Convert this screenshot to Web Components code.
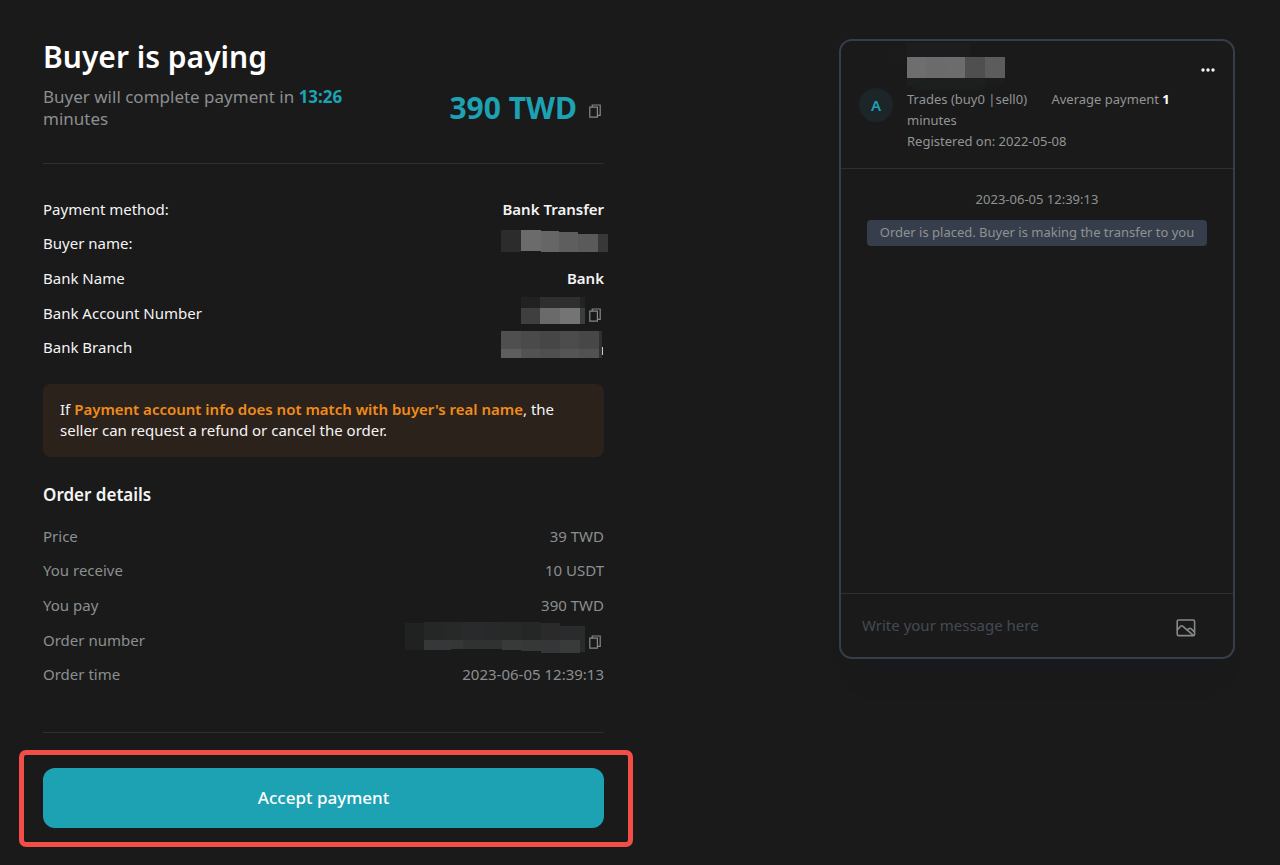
<!DOCTYPE html>
<html lang="en">
<head>
<meta charset="utf-8">
<meta name="viewport" content="width=device-width, initial-scale=1">
<title>Buyer is paying</title>
<style>
  body {
    margin: 0;
    background: #1a1a1a;
    color: #f4f4f4;
    font-family: "Noto Sans", sans-serif;
    font-size: 15px;
    line-height: 21px;
    --muted: #8b8f90;
    --accent: #1da2b4;
    --line: #2c2f33;
    --outline: #373e4b;
    --alert: #f04e47;
    --warn: #f08c1a;
  }
</style>
</head>
<body>
<order-page>
  <order-summary slot="main">
    <order-heading>
      <span slot="title">Buyer is paying</span>
      <span slot="note">Buyer will complete payment in <accent-text>13:26</accent-text> minutes</span>
      <span slot="amount">390 TWD</span>
    </order-heading>
    <detail-list>
      <detail-row label="Payment method:" strong>Bank Transfer</detail-row>
      <detail-row label="Buyer name:" bleed><redacted-text width="107" height="22" cells="0,0,20,22,#2c2c2c;20,0,20,21,#6b6b6b;40,1,18,21,#666;58,2,19,20,#5e5e5e;77,4,20,18,#5a5a5a;97,4,10,18,#383838"></redacted-text></detail-row>
      <detail-row label="Bank Name" strong>Bank</detail-row>
      <detail-row label="Bank Account Number" copy><redacted-text width="64" height="27" cells="0,0,19,11,#212121;19,0,40,11,#2f2f2f;59,0,5,11,#232323;0,11,19,16,#3f3f3f;19,11,20,16,#6a6a6a;39,11,20,16,#747474;59,11,5,16,#3a3e3e"></redacted-text></detail-row>
      <detail-row label="Bank Branch"><redacted-text width="103" height="27" cells="0,0,20,18,#4f4f4f;20,0,19,18,#4a4a4a;39,0,20,18,#464646;59,0,19,18,#4c4c4c;78,0,20,18,#474747;98,0,3,27,#303030;0,18,20,9,#5e5e5e;20,18,19,9,#525252;39,18,20,9,#4f4f4f;59,18,19,9,#555;78,18,20,9,#525252;101,16,1,8,#ccc"></redacted-text></detail-row>
    </detail-list>
    <warning-note>If <strong>Payment account info does not match with buyer's real name</strong>, the <span>seller can request a refund or cancel the order.</span></warning-note>
    <section-title>Order details</section-title>
    <detail-list muted>
      <detail-row label="Price">39 TWD</detail-row>
      <detail-row label="You receive">10 USDT</detail-row>
      <detail-row label="You pay">390 TWD</detail-row>
      <detail-row label="Order number" copy><redacted-text width="180" height="31" cells="0,1,19,27,#202121;19,0,20,18,#252727;39,0,19,18,#272828;58,0,19,18,#292a2b;77,0,20,18,#27292a;97,0,19,18,#272828;116,0,20,18,#252727;136,1,19,17,#2a2a2a;155,4,20,14,#2a2b2c;175,4,5,26,#2a2c2c;19,18,27,10,#363738;46,18,12,9,#353736;58,18,19,9,#303231;77,18,20,9,#303231;97,18,19,10,#38393a;116,18,20,11,#363837;136,18,19,13,#353637;155,18,20,13,#393b3a"></redacted-text></detail-row>
      <detail-row label="Order time">2023-06-05 12:39:13</detail-row>
    </detail-list>
    <accept-action>Accept payment</accept-action>
  </order-summary>
  <chat-card slot="side">
    <chat-profile slot="profile" initial="A">
      <redacted-text slot="name" width="98" height="21" cells="0,-14,63,14,#1d1d1f;-15,-2,15,2,#1c1c1c;0,0,19,21,#6e6e6e;19,0,20,21,#6b6b6b;39,0,20,21,#6c6c6c;58,0,20,21,#4f4f4f;78,0,20,21,#5c5c5c;0,21,78,8,#1d1e1e;78,21,20,6,#1c1c1c;6,29,70,4,#1c1d1d"></redacted-text>
      <span slot="trades">Trades (buy0 |sell0)</span>
      <span slot="average">Average payment <b>1</b> minutes</span>
      <span slot="since">Registered on: 2022-05-08</span>
    </chat-profile>
    <chat-message slot="messages" time="2023-06-05 12:39:13">Order is placed. Buyer is making the transfer to you</chat-message>
    <chat-composer slot="composer"></chat-composer>
  </chat-card>
</order-page>

<script>
  const define = (name, html, setup) => {
    const template = document.createElement('template');
    template.innerHTML = html;
    customElements.define(name, class extends HTMLElement {
      constructor() {
        super();
        this.attachShadow({ mode: 'open' }).append(template.content.cloneNode(true));
      }
      connectedCallback() {
        if (setup) setup(this, this.shadowRoot);
      }
    });
  };

  define('order-page', `
    <style>
      :host { display: block; padding: 39px 45px 18px 43px; }
      .layout { display: grid; grid-template-columns: 561fr 396fr; column-gap: 235px; align-items: start; }
      @media (max-width: 900px) { .layout { grid-template-columns: 1fr; row-gap: 40px; } }
    </style>
    <div class="layout">
      <main><slot name="main"></slot></main>
      <aside><slot name="side"></slot></aside>
    </div>`);

  define('order-summary', `
    <style>:host { display: block; }</style>
    <slot></slot>`);

  define('accent-text', `
    <style>:host { display: inline; color: var(--accent); font-weight: 700; }</style>
    <slot></slot>`);

  define('copy-button', `
    <style>
      :host { display: inline-flex; flex: none; }
      button { all: unset; display: flex; cursor: pointer; }
      svg { display: block; fill: none; stroke: #858989; stroke-width: 1.2; }
    </style>
    <button type="button" aria-label="Copy">
      <svg width="12" height="14" viewBox="0 0 12 14"><path d="M.8 3.2h7.6v10H.8zM3.2 3V1h8v10.4H8.6"/></svg>
    </button>`);

  define('order-heading', `
    <style>
      :host { display: flex; justify-content: space-between; align-items: flex-start; border-bottom: 1px solid var(--line); padding-bottom: 33px; }
      h1 { margin: 0; font-size: 30px; line-height: 36px; font-weight: 600; color: #fff; }
      p { margin: 11px 0 0; font-size: 17px; line-height: 22px; color: var(--muted); max-width: 320px; }
      .amount { display: flex; align-items: center; gap: 12px; padding: 49px 3px 0 0; font-size: 30px; line-height: 40px; font-weight: 700; color: var(--accent); white-space: nowrap; }
      copy-button { padding-top: 5px; }
    </style>
    <div><h1><slot name="title"></slot></h1><p><slot name="note"></slot></p></div>
    <div class="amount"><slot name="amount"></slot><copy-button></copy-button></div>`);

  define('detail-list', `
    <style>
      :host { display: grid; grid-auto-rows: 1fr; min-height: 173px; margin-top: 28px; }
      :host([muted]) { margin-top: 12px; color: var(--muted); }
    </style>
    <slot></slot>`);

  define('detail-row', `
    <style>
      :host { display: flex; align-items: center; justify-content: space-between; }
      .value { display: flex; align-items: center; gap: 4px; }
      :host([strong]) .value { font-weight: 600; }
      :host([copy]) .value { padding-right: 3px; }
      :host([bleed]) .value { margin-right: -4px; }
      ::slotted(redacted-text) { margin: -8px 0 -2px; }
      copy-button { padding-top: 4px; }
      copy-button[hidden] { display: none; }
    </style>
    <span class="label"></span>
    <span class="value"><slot></slot><copy-button hidden></copy-button></span>`,
    (host, root) => {
      root.querySelector('.label').textContent = host.getAttribute('label');
      root.querySelector('copy-button').hidden = !host.hasAttribute('copy');
    });

  define('redacted-text', `
    <style>
      :host { display: block; }
      svg { display: block; overflow: visible; shape-rendering: crispEdges; }
    </style>
    <svg aria-hidden="true"></svg>`,
    (host, root) => {
      const svg = root.querySelector('svg');
      svg.setAttribute('width', host.getAttribute('width'));
      svg.setAttribute('height', host.getAttribute('height'));
      svg.innerHTML = host.getAttribute('cells').split(';').map(cell => {
        const [x, y, w, h, fill] = cell.split(',');
        return `<rect x="${x}" y="${y}" width="${w}" height="${h}" fill="${fill}"/>`;
      }).join('');
    });

  define('warning-note', `
    <style>
      :host { display: block; margin-top: 19px; padding: 15px 17px 16px; border-radius: 8px; background: #2c221c; }
      ::slotted(strong) { color: var(--warn); font-weight: 600; }
    </style>
    <slot></slot>`);

  define('section-title', `
    <style>
      :host { display: block; margin-top: 26px; }
      h2 { margin: 0; font-size: 17px; line-height: 24px; font-weight: 600; }
    </style>
    <h2><slot></slot></h2>`);

  define('accept-action', `
    <style>
      :host { display: block; margin-top: 40px; border-top: 1px solid var(--line); padding-top: 17px; }
      .frame { margin: 0 -29px 0 -24px; border: 5px solid var(--alert); border-radius: 7px; padding: 13px 24px 14px 19px; }
      button { display: block; width: 100%; height: 60px; border: 0; border-radius: 12px; background: var(--accent); color: #fff; font: 500 17px/24px "Noto Sans", sans-serif; cursor: pointer; }
    </style>
    <div class="frame"><button type="button"><slot></slot></button></div>`);

  define('chat-card', `
    <style>
      :host { display: flex; flex-direction: column; border: 2px solid var(--outline); border-radius: 13px; box-shadow: 0 36px 20px -24px #181a1f; }
      .messages { min-height: 388px; padding: 20px 26px 16px; }
    </style>
    <slot name="profile"></slot>
    <div class="messages"><slot name="messages"></slot></div>
    <slot name="composer"></slot>`);

  define('chat-profile', `
    <style>
      :host { display: flex; gap: 14px; padding: 16px 16px 16px 18px; border-bottom: 1px solid var(--line); font-size: 13px; line-height: 21px; color: #929596; }
      .avatar { flex: none; align-self: center; margin-top: 1px; width: 34px; height: 34px; border-radius: 50%; background: #1c2629; color: var(--accent); font-size: 15px; line-height: 34px; font-weight: 600; text-align: center; }
      .info { flex: 1; }
      .top { display: flex; align-items: center; justify-content: space-between; height: 21px; margin-bottom: 11px; }
      button { all: unset; display: flex; cursor: pointer; padding-top: 5px; }
      p { margin: 0; }
      .trades { margin-right: 21px; }
    </style>
    <span class="avatar"></span>
    <div class="info">
      <div class="top">
        <slot name="name"></slot>
        <button type="button" aria-label="More"><svg width="18" height="6" viewBox="0 0 18 6" fill="#f4f4f4"><circle cx="4" cy="3" r="1.7"/><circle cx="9" cy="3" r="1.7"/><circle cx="14" cy="3" r="1.7"/></svg></button>
      </div>
      <p><span class="trades"><slot name="trades"></slot></span> <slot name="average"></slot></p>
      <p><slot name="since"></slot></p>
    </div>`,
    (host, root) => {
      root.querySelector('.avatar').textContent = host.getAttribute('initial');
      host.querySelectorAll('b').forEach(b => { b.style.color = '#fff'; });
    });

  define('chat-message', `
    <style>
      :host { display: block; text-align: center; font-size: 13px; color: #8f9293; }
      time { display: block; margin-bottom: 10px; }
      p { margin: 0; padding: 2px 8px 3px; border-radius: 4px; background: #373e4b; }
    </style>
    <time></time>
    <p><slot></slot></p>`,
    (host, root) => { root.querySelector('time').textContent = host.getAttribute('time'); });

  define('chat-composer', `
    <style>
      :host { display: flex; align-items: center; border-top: 1px solid var(--line); padding: 19px 37px 20px 21px; }
      input { flex: 1; min-width: 0; height: 24px; padding: 0; border: 0; outline: 0; background: transparent; color: #f4f4f4; font: 15px/24px "Noto Sans", sans-serif; }
      input::placeholder { color: #444a54; opacity: 1; }
      button { all: unset; display: flex; cursor: pointer; padding-top: 5px; }
      svg { display: block; fill: none; stroke: #858989; stroke-width: 1.6; stroke-linejoin: round; stroke-linecap: round; }
    </style>
    <input type="text" placeholder="Write your message here" aria-label="Message">
    <button type="button" aria-label="Send image">
      <svg width="20" height="18" viewBox="0 0 20 18"><rect x="1.2" y="1" width="17.4" height="15.6" rx="1.4"/><path d="M1.4 10.6 4.6 7.2Q5.6 6.4 6.6 7.2L17.4 16.4M11.2 11.2l1.8-1.6q1-.8 2 0l3.4 3.2"/></svg>
    </button>`);
</script>
</body>
</html>
